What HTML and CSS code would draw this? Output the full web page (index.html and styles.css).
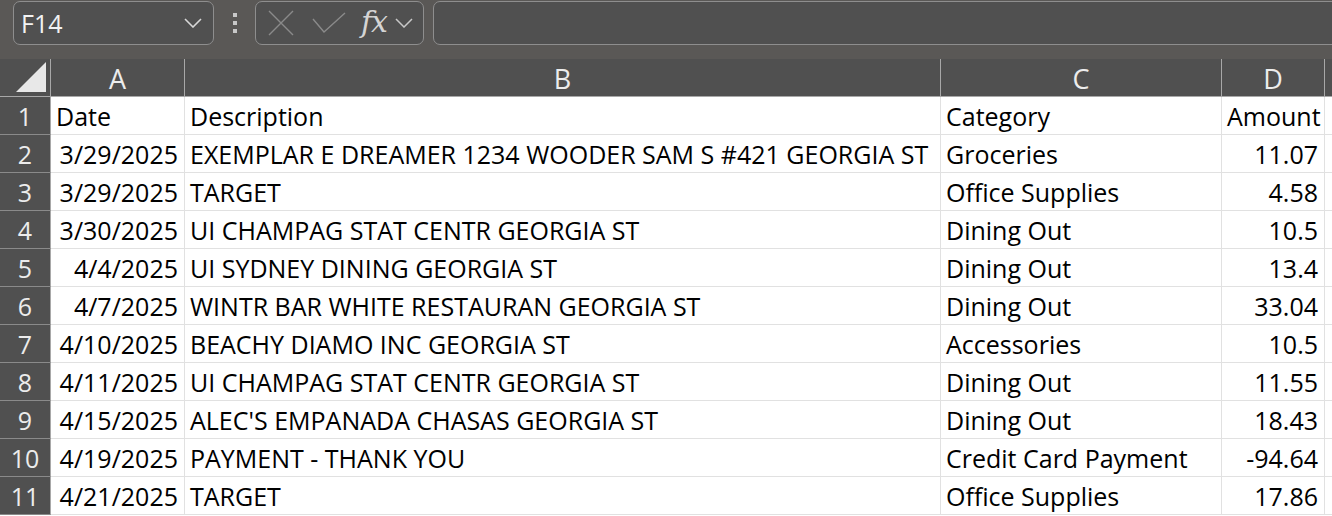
FILE: index.html
```html
<!DOCTYPE html>
<html>
<head>
<meta charset="utf-8">
<link rel="stylesheet" href="styles.css">
</head>
<body>
<div class="app">
  <div class="toolbar">
    <div class="namebox">
      <span class="nb-text">F14</span>
      <svg class="nb-chev" width="18" height="10" viewBox="0 0 18 10"><path d="M1 1 L9 9 L17 1" fill="none" stroke="#d8d8d8" stroke-width="1.6"/></svg>
    </div>
    <div class="grip">
      <svg width="6" height="22" viewBox="0 0 6 22"><rect x="1" y="1" width="4" height="4" fill="#c8c8c8"/><rect x="1" y="9" width="4" height="4" fill="#c8c8c8"/><rect x="1" y="17" width="4" height="4" fill="#c8c8c8"/></svg>
    </div>
    <div class="fxbox">
      <svg class="ic-x" width="26" height="26" viewBox="0 0 26 26"><path d="M1 1 L25 25 M25 1 L1 25" stroke="#8a8a8a" stroke-width="1.4" fill="none"/></svg>
      <svg class="ic-check" width="34" height="22" viewBox="0 0 34 22"><path d="M1 7 L12 20 L33 1" stroke="#8a8a8a" stroke-width="1.4" fill="none"/></svg>
      <span class="fx">fx</span>
      <svg class="fx-chev" width="18" height="10" viewBox="0 0 18 10"><path d="M1 1 L9 9 L17 1" fill="none" stroke="#c8c8c8" stroke-width="1.5"/></svg>
    </div>
    <div class="formula"></div>
  </div>
  <div class="sheet">
    <div class="corner"><svg width="32" height="32" viewBox="0 0 32 32"><polygon points="31,1 31,31 1,31" fill="#e8e8e8"/></svg></div>
    <div class="colhead">A</div>
    <div class="colhead">B</div>
    <div class="colhead">C</div>
    <div class="colhead">D</div>
    <div class="colhead"></div>

    <div class="rowhead">1</div>
    <div class="cell">Date</div>
    <div class="cell">Description</div>
    <div class="cell">Category</div>
    <div class="cell">Amount</div>
    <div class="cell"></div>

    <div class="rowhead">2</div>
    <div class="cell num">3/29/2025</div>
    <div class="cell">EXEMPLAR E DREAMER 1234 WOODER SAM S #421 GEORGIA ST</div>
    <div class="cell">Groceries</div>
    <div class="cell num">11.07</div>
    <div class="cell"></div>

    <div class="rowhead">3</div>
    <div class="cell num">3/29/2025</div>
    <div class="cell">TARGET</div>
    <div class="cell">Office Supplies</div>
    <div class="cell num">4.58</div>
    <div class="cell"></div>

    <div class="rowhead">4</div>
    <div class="cell num">3/30/2025</div>
    <div class="cell">UI CHAMPAG STAT CENTR GEORGIA ST</div>
    <div class="cell">Dining Out</div>
    <div class="cell num">10.5</div>
    <div class="cell"></div>

    <div class="rowhead">5</div>
    <div class="cell num">4/4/2025</div>
    <div class="cell">UI SYDNEY DINING GEORGIA ST</div>
    <div class="cell">Dining Out</div>
    <div class="cell num">13.4</div>
    <div class="cell"></div>

    <div class="rowhead">6</div>
    <div class="cell num">4/7/2025</div>
    <div class="cell">WINTR BAR WHITE RESTAURAN GEORGIA ST</div>
    <div class="cell">Dining Out</div>
    <div class="cell num">33.04</div>
    <div class="cell"></div>

    <div class="rowhead">7</div>
    <div class="cell num">4/10/2025</div>
    <div class="cell">BEACHY DIAMO INC GEORGIA ST</div>
    <div class="cell">Accessories</div>
    <div class="cell num">10.5</div>
    <div class="cell"></div>

    <div class="rowhead">8</div>
    <div class="cell num">4/11/2025</div>
    <div class="cell">UI CHAMPAG STAT CENTR GEORGIA ST</div>
    <div class="cell">Dining Out</div>
    <div class="cell num">11.55</div>
    <div class="cell"></div>

    <div class="rowhead">9</div>
    <div class="cell num">4/15/2025</div>
    <div class="cell">ALEC'S EMPANADA CHASAS GEORGIA ST</div>
    <div class="cell">Dining Out</div>
    <div class="cell num">18.43</div>
    <div class="cell"></div>

    <div class="rowhead">10</div>
    <div class="cell num">4/19/2025</div>
    <div class="cell">PAYMENT - THANK YOU</div>
    <div class="cell">Credit Card Payment</div>
    <div class="cell num">-94.64</div>
    <div class="cell"></div>

    <div class="rowhead">11</div>
    <div class="cell num">4/21/2025</div>
    <div class="cell">TARGET</div>
    <div class="cell">Office Supplies</div>
    <div class="cell num">17.86</div>
    <div class="cell"></div>
  </div>
</div>
</body>
</html>
```
FILE: styles.css
```css
* { box-sizing: border-box; }
html, body { margin: 0; padding: 0; }
body {
  width: 1332px;
  height: 516px;
  overflow: hidden;
  background: #ffffff;
  font-family: "Open Sans", "Noto Sans", Arial, sans-serif;
}
.app { width: 1332px; }

.toolbar {
  height: 59px;
  background: #5a5856;
  display: flex;
  align-items: flex-start;
  padding-top: 1px;
  overflow: hidden;
}
.toolbar > * { flex-shrink: 0; }
.namebox {
  margin-left: 13px;
  width: 201px;
  height: 44px;
  border: 1px solid #8e8e8e;
  border-radius: 7px;
  background: #505050;
  display: flex;
  align-items: center;
  justify-content: space-between;
  padding: 0 11px 0 7px;
}
.nb-text {
  color: #f2f2f2;
  font-size: 25px;
  line-height: 1;
  padding-top: 1px;
}
.grip {
  width: 41px;
  height: 44px;
  display: flex;
  align-items: center;
  justify-content: center;
}
.fxbox {
  width: 169px;
  height: 44px;
  border: 1px solid #8e8e8e;
  border-radius: 7px;
  background: #505050;
  display: flex;
  align-items: center;
  padding-left: 12px;
}
.ic-x { margin-right: 18px; }
.ic-check { margin-right: 15px; }
.fx {
  font-family: "DejaVu Serif", "Liberation Serif", serif;
  font-style: italic;
  font-size: 30px;
  color: #d4d4d4;
  letter-spacing: -1px;
  line-height: 1;
  margin-right: 8px;
  padding-bottom: 3px;
}
.formula {
  margin-left: 9px;
  width: 920px;
  height: 44px;
  border: 1px solid #8e8e8e;
  border-radius: 7px;
  background: #505050;
}

.sheet {
  display: grid;
  grid-template-columns: 51px 134px 756px 281px 103px 1fr;
  grid-auto-rows: 38px;
}
.corner, .colhead, .rowhead {
  background: #505050;
  color: #ececec;
}
.corner {
  border-right: 1px solid #a8a8a8;
  border-bottom: 1px solid #a8a8a8;
  display: flex;
  align-items: flex-end;
  justify-content: flex-end;
  padding: 0 3px 3px 0;
}
.colhead {
  border-right: 1px solid #a8a8a8;
  border-bottom: 1px solid #a8a8a8;
  font-size: 27px;
  line-height: 1;
  display: flex;
  align-items: flex-end;
  justify-content: center;
  padding-bottom: 4px;
}
.rowhead {
  border-right: 1px solid #a8a8a8;
  border-bottom: 1px solid #8a8a8a;
  font-size: 25px;
  line-height: 1;
  display: flex;
  align-items: flex-end;
  justify-content: center;
  padding-bottom: 5px;
}
.cell {
  border-right: 1px solid #e1e1e1;
  border-bottom: 1px solid #e1e1e1;
  color: #000;
  font-size: 25px;
  line-height: 1;
  display: flex;
  align-items: flex-end;
  padding: 0 6px 5px 5px;
  white-space: nowrap;
  overflow: hidden;
}
.cell.num { justify-content: flex-end; }
```
